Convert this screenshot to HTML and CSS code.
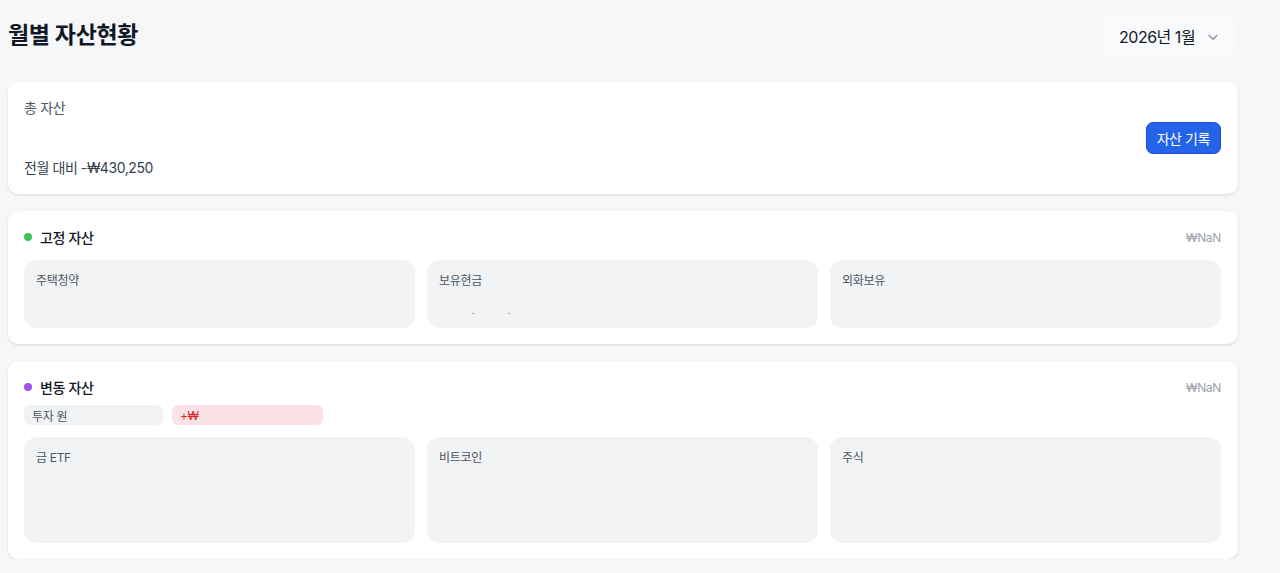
FILE: index.html
```html
<!DOCTYPE html>
<html lang="ko">
<head>
<meta charset="utf-8">
<title>월별 자산현황</title>
<link rel="stylesheet" href="styles.css">
</head>
<body>
<div class="page">
  <header class="top">
    <h1 class="title">월별 자산현황</h1>
    <button class="month">
      <span>2026년 1월</span>
      <svg class="chev" width="12" height="12" viewBox="0 0 12 12"><path d="M2 4.2 6 8.2 10 4.2" fill="none" stroke="#8a8f99" stroke-width="1.3" stroke-linecap="round" stroke-linejoin="round"/></svg>
    </button>
  </header>

  <section class="card total">
    <div class="total-left">
      <div class="total-label">총 자산</div>
      <div class="total-value"></div>
      <div class="total-diff">전월 대비 -₩430,250</div>
    </div>
    <button class="record">자산 기록</button>
  </section>

  <section class="card">
    <div class="sec-head">
      <div class="sec-title"><span class="dot green"></span>고정 자산</div>
      <div class="sec-sum">₩NaN</div>
    </div>
    <div class="tiles">
      <div class="tile short"><div class="tile-label">주택청약</div></div>
      <div class="tile short"><div class="tile-label">보유현금</div><div class="specks"><span class="speck"></span><span class="speck"></span></div></div>
      <div class="tile short"><div class="tile-label">외화보유</div></div>
    </div>
  </section>

  <section class="card">
    <div class="sec-head">
      <div class="sec-title"><span class="dot purple"></span>변동 자산</div>
      <div class="sec-sum">₩NaN</div>
    </div>
    <div class="pills">
      <span class="pill gray">투자 원</span>
      <span class="pill red">+₩</span>
    </div>
    <div class="tiles">
      <div class="tile tall"><div class="tile-label">금 ETF</div></div>
      <div class="tile tall"><div class="tile-label">비트코인</div></div>
      <div class="tile tall"><div class="tile-label">주식</div></div>
    </div>
  </section>
</div>
</body>
</html>
```
FILE: styles.css
```css
* { box-sizing: border-box; }
html, body { margin: 0; padding: 0; }
body {
  background: #f6f7f9;
  font-family: Inter, "Noto Sans CJK KR", "Noto Sans", sans-serif;
  color: #111827;
  letter-spacing: -0.02em;
}
.page {
  width: 1230px;
  margin-left: 8px;
  padding-top: 15px;
  display: flex;
  flex-direction: column;
  gap: 17px;
}
.top {
  display: flex;
  justify-content: space-between;
  align-items: center;
  height: 42px;
  margin-bottom: 8px;
}
.title {
  margin: 0 0 2px 0;
  font-size: 23px;
  line-height: 30px;
  font-weight: 700;
  color: #111827;
}
.month {
  display: flex;
  align-items: center;
  justify-content: space-between;
  width: 133px;
  height: 42px;
  margin-right: 2px;
  padding: 0 17px 0 16px;
  border: none;
  border-radius: 12px;
  background: #f9fafb;
  font-family: inherit;
  font-size: 16px;
  letter-spacing: -0.03em;
  white-space: nowrap;
  color: #111827;
}
.chev { margin-top: 1px; flex: none; }
.card {
  background: #fff;
  border-radius: 10px;
  box-shadow: 0 1px 3px rgba(0,0,0,0.10), 0 1px 2px rgba(0,0,0,0.04);
  padding: 16px 17px 16px 16px;
}
.total {
  display: flex;
  justify-content: space-between;
  align-items: center;
  height: 112px;
}
.total-label { font-size: 14px; line-height: 20px; color: #4b5563; }
.total-value { height: 40px; }
.total-diff { font-size: 14px; line-height: 20px; color: #374151; letter-spacing: -0.03em; }
.record {
  height: 32px;
  padding: 0 10px;
  border: 1px solid #1d4ed8;
  border-radius: 7px;
  background: #2563eb;
  color: #fff;
  font-family: inherit;
  font-size: 14px;
  letter-spacing: -0.03em;
}
.sec-head {
  display: flex;
  justify-content: space-between;
  align-items: center;
  height: 20px;
}
.sec-title {
  display: flex;
  align-items: center;
  gap: 8px;
  font-size: 14px;
  font-weight: 500;
  color: #111827;
}
.dot { width: 8px; height: 8px; border-radius: 50%; display: inline-block; }
.dot.green { background: #3fc45c; }
.dot.purple { background: #a24ff0; }
.sec-sum { font-size: 12px; color: #9ca3af; }
.tiles {
  display: grid;
  grid-template-columns: repeat(3, 1fr);
  gap: 12px;
  margin-top: 13px;
}
.tile {
  background: #f2f3f5;
  border-radius: 13px;
  padding: 13px 12px 12px;
}
.tile.short { height: 68px; }
.tile.tall { height: 106px; }
.tile-label { font-size: 12px; line-height: 16px; color: #4b5563; }
.specks { display: flex; gap: 34px; padding-left: 33px; margin-top: 24px; }
.speck { width: 2px; height: 1px; background: #9ca3af; display: block; }
.pills {
  display: flex;
  gap: 9px;
  margin-top: 8px;
}
.pill {
  display: flex;
  align-items: center;
  height: 20px;
  border-radius: 6px;
  padding: 0 8px;
  font-size: 12px;
}
.pill.gray { width: 139px; background: #f1f2f4; color: #4b5563; }
.pill.red { width: 151px; background: #fbe3e5; color: #dc2626; }
.pills + .tiles { margin-top: 12px; }
```
